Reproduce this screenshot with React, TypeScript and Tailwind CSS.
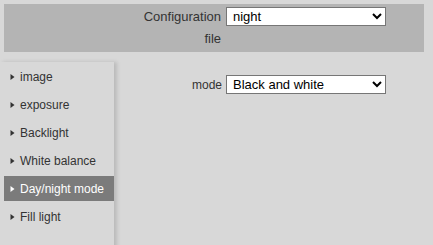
import React from "react";

const items = ["image", "exposure", "Backlight", "White balance", "Day/night mode", "Fill light"];

function Tri({ active }: { active: boolean }) {
  return (
    <svg width="5" height="8" viewBox="0 0 5 8" className="shrink-0">
      <polygon points="0.5,1 4.5,4 0.5,7" fill={active ? "#ffffff" : "#333333"} />
    </svg>
  );
}

export default function App() {
  return (
    <div
      className="w-[433px] h-[245px] overflow-hidden bg-[#d8d8d8] pt-[4px] pl-[4px] text-[#333333]"
      style={{ fontFamily: '"Liberation Sans", Arial, sans-serif' }}
    >
      <div className="w-[420px] h-[48px] bg-[#b4b4b4] flex items-start pl-[137px]">
        <div className="w-[80px] text-right text-[13px] leading-[22px] pt-[2px]">Configuration file</div>
        <select
          defaultValue="night"
          className="ml-[5px] mt-[3px] w-[160px] h-[19px] bg-white border border-[#767676] text-[13px] text-black pl-[2px] outline-none"
        >
          <option value="night">night</option>
          <option value="day">day</option>
        </select>
      </div>
      <div className="flex mt-[10px] -ml-[4px]">
        <div className="w-[114px] h-[200px] pl-[4px] pt-[2px] shadow-[3px_0_4px_rgba(0,0,0,0.14)] bg-[#d8d8d8] relative z-10">
          {items.map((it) => {
            const active = it === "Day/night mode";
            return (
              <div
                key={it}
                className={
                  "h-[25px] mb-[3px] flex items-center gap-[5px] pl-[6px] text-[12px] " +
                  (active ? "bg-[#7b7b7b] text-white" : "text-[#333333]")
                }
              >
                <Tri active={active} />
                <span>{it}</span>
              </div>
            );
          })}
        </div>
        <div className="flex-1 pt-[13px]">
          <div className="flex items-center pl-[77px]">
            <span className="text-[12px] w-[31px] text-right">mode</span>
            <select
              defaultValue="bw"
              className="ml-[4px] w-[160px] h-[19px] bg-white border border-[#767676] text-[13px] text-black pl-[2px] outline-none"
            >
              <option value="bw">Black and white</option>
              <option value="color">Color</option>
              <option value="auto">Auto</option>
            </select>
          </div>
        </div>
      </div>
    </div>
  );
}
